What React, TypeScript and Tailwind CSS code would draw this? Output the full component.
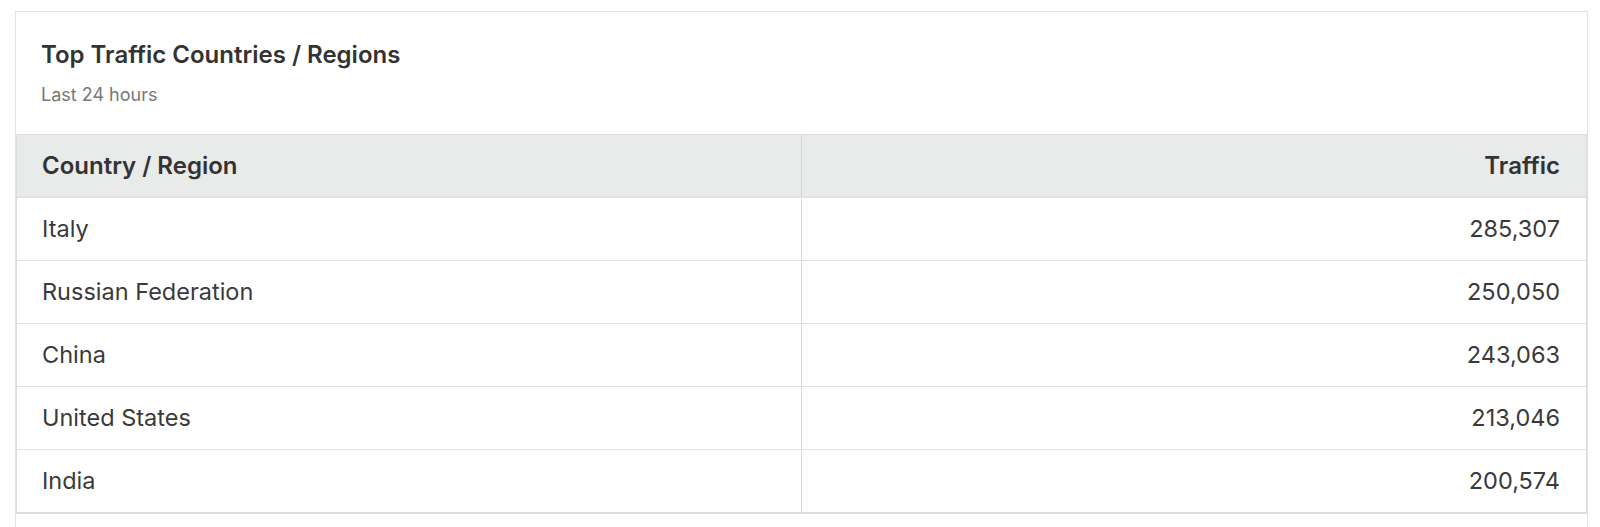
const ROWS = [
  { country: 'Italy', traffic: '285,307' },
  { country: 'Russian Federation', traffic: '250,050' },
  { country: 'China', traffic: '243,063' },
  { country: 'United States', traffic: '213,046' },
  { country: 'India', traffic: '200,574' },
]

export default function App() {
  return (
    <div
      className="min-h-[527px] bg-white pl-[15px] pr-[12px] pt-[11px] text-[#333]"
      style={{ fontFamily: 'Inter, "Noto Sans", sans-serif' }}
    >
      <div className="min-h-[530px] border border-[#e3e3e3] bg-white">
        <div className="px-[25px] pt-[28px] pb-[28px]">
          <h2 className="text-[24px] font-semibold leading-[30px] text-[#333]">
            Top Traffic Countries / Regions
          </h2>
          <p className="mt-[14px] text-[18px] leading-[22px] text-[#777]">Last 24 hours</p>
        </div>

        <div className="border border-b-2 border-[#dcdcdc]">
          <div className="grid h-[63px] grid-cols-2 border-b-2 border-[#e2e2e2] bg-[#e9eaea] text-[24px] font-semibold">
            <div className="flex items-center border-r border-[#d6d6d6] px-[25px]">Country / Region</div>
            <div className="flex items-center justify-end px-[26px]">Traffic</div>
          </div>
          {ROWS.map((row, i) => {
            const last = i === ROWS.length - 1
            return (
              <div
                key={row.country}
                className={`grid grid-cols-2 text-[23.5px] text-[#3a3a3a] ${last ? 'h-[62px]' : 'h-[63px] border-b border-[#e2e2e2]'}`}
              >
                <div className="flex items-center border-r border-[#d9d9d9] px-[25px]">{row.country}</div>
                <div className="flex items-center justify-end px-[26px]">{row.traffic}</div>
              </div>
            )
          })}
        </div>
      </div>
    </div>
  )
}
